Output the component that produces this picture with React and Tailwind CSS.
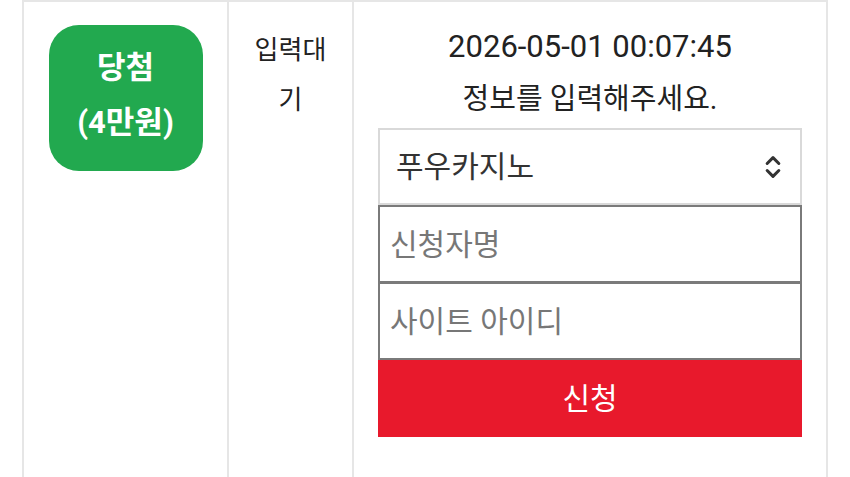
import { ChevronsUpDown } from "lucide-react";

const font = { fontFamily: 'Roboto, "Noto Sans CJK KR", sans-serif' };

export default function App() {
  return (
    <div className="min-h-[477px] bg-white pl-[22px]" style={font}>
      <div className="flex w-[806px] min-h-[477px] border-x-2 border-t-2 border-[#e6e6e6] text-[#222]">
        {/* prize badge */}
        <div className="w-[205px] shrink-0 border-r-2 border-[#e6e6e6] pt-[23px] flex justify-center">
          <div className="flex h-[146px] w-[154px] flex-col items-center justify-center rounded-[30px] bg-[#22a94f] pb-[6px] text-[31px] font-bold leading-[55px] text-white">
            <span>당첨</span>
            <span>(4만원)</span>
          </div>
        </div>

        {/* status */}
        <div className="w-[125px] shrink-0 border-r-2 border-[#e6e6e6] px-[18px] pt-[23px] text-center text-[26px] leading-[50px]">
          입력대기
        </div>

        {/* entry form */}
        <div className="flex-1 px-[24px] pt-[20px]">
          <p className="text-center text-[31px] leading-[50px]">2026-05-01 00:07:45</p>
          <p className="text-center text-[29px] leading-[54px]">정보를 입력해주세요.</p>
          <div className="mt-[2px] flex h-[77px] items-center justify-between border-2 border-[#d9d9d9] pl-[16px] pr-[13px] text-[30px] text-[#333]">
            <span>푸우카지노</span>
            <ChevronsUpDown size={28} strokeWidth={2.6} className="text-[#333]" />
          </div>
          <input
            placeholder="신청자명"
            className="block h-[78px] w-full border-2 border-[#7a7a7a] px-[10px] text-[30px] text-[#333] outline-none placeholder:text-[#777]"
          />
          <input
            placeholder="사이트 아이디"
            className="-mt-[1px] block h-[78px] w-full border-2 border-[#7a7a7a] px-[10px] text-[30px] text-[#333] outline-none placeholder:text-[#777]"
          />
          <button className="block h-[77px] w-full bg-[#e8192c] text-[30px] text-white">신청</button>
        </div>
      </div>
    </div>
  );
}
